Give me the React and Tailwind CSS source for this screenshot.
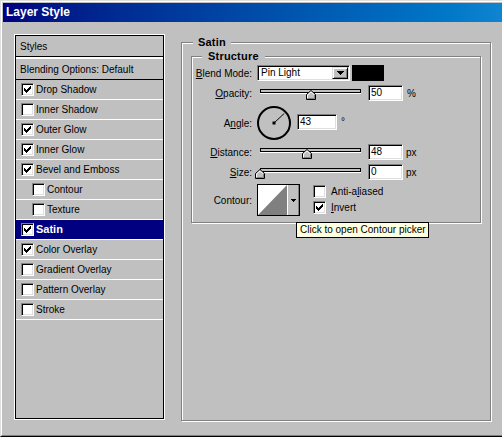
import React from 'react'

const font = "font-['Liberation_Sans',Arial,sans-serif]"

const styleRows = [
  { label: 'Drop Shadow', checked: true },
  { label: 'Inner Shadow', checked: false },
  { label: 'Outer Glow', checked: true },
  { label: 'Inner Glow', checked: true },
  { label: 'Bevel and Emboss', checked: true },
  { label: 'Contour', checked: false, sub: true },
  { label: 'Texture', checked: false, sub: true },
  { label: 'Satin', checked: true, selected: true },
  { label: 'Color Overlay', checked: true },
  { label: 'Gradient Overlay', checked: false },
  { label: 'Pattern Overlay', checked: false },
  { label: 'Stroke', checked: false },
]

// classic windows check mark, drawn pixel by pixel
const checkPixels = [
  [6, 0, 1], [5, 1, 2], [0, 2, 1], [4, 2, 3], [0, 3, 2], [3, 3, 3], [0, 4, 5], [1, 5, 3], [2, 6, 1],
]

const Checkbox = ({ checked }) => (
  <span className="w-[13px] h-[13px] shrink-0 flex items-center justify-center bg-white border border-t-[#808080] border-l-[#808080] border-r-white border-b-white shadow-[inset_1px_1px_0_#000,inset_-1px_-1px_0_#dfdfdf]">
    {checked && (
      <svg width="7" height="7" viewBox="0 0 7 7" shapeRendering="crispEdges">
        {checkPixels.map(([x, y, w], i) => (
          <rect key={i} x={x} y={y} width={w} height="1" fill="#000" />
        ))}
      </svg>
    )}
  </span>
)

const Sunken = ({ className, children }) => (
  <div className={`bg-white border border-t-[#808080] border-l-[#808080] border-r-white border-b-white shadow-[inset_1px_1px_0_#000,inset_-1px_-1px_0_#dfdfdf] p-[1px] ${className}`}>
    {children}
  </div>
)

const Thumb = () => (
  <svg width="10" height="10" viewBox="0 0 10 10">
    <polygon points="0.5,9.5 0.5,4.5 5,0.5 9.5,4.5 9.5,9.5" fill="#c0c0c0" stroke="#000" />
    <polyline points="1.5,8.5 1.5,5 5,1.9 8,4.6" fill="none" stroke="#fff" />
    <polyline points="8.5,5 8.5,8.5 1.5,8.5" fill="none" stroke="#808080" />
  </svg>
)

const Slider = ({ pct }) => (
  <div className="relative ml-[4px] w-[109px] h-[16px] shrink-0">
    <div className="absolute left-[4px] top-[4px] w-[101px] h-[4px] border border-black bg-[#c0c0c0] shadow-[0_1px_0_#fff]" />
    <div className="absolute top-[5px]" style={{ left: `${4 + pct * 101 - 5}px` }}>
      <Thumb />
    </div>
  </div>
)

const Field = ({ value, w = 'w-[35px]' }) => (
  <Sunken className={`${w} h-[16px] flex items-center text-[10px] leading-none pl-[2px] shrink-0`}>
    {value}
  </Sunken>
)

const Label = ({ children }) => (
  <span className="w-[60px] text-right text-[10px] shrink-0">{children}</span>
)

const u = (c) => <span className="underline underline-offset-[1px]">{c}</span>

const App = () => {
  return (
    <div className={`relative w-[502px] h-[437px] overflow-hidden bg-[#c0c0c0] text-black ${font} border-t border-l border-b border-t-[#dfdfdf] border-l-[#dfdfdf] border-b-black`}>
      <div className="h-full border-t border-l border-b border-t-white border-l-white border-b-[#808080] pt-[1px] pl-[1px]">
        {/* Title bar */}
        <div className="h-[19px] bg-gradient-to-r from-[#000080] to-[#1084d0] pl-[3px] text-white font-bold text-[12px] leading-[19px]">
          Layer Style
        </div>

        <div className="flex items-start pt-[12px] pl-[11px]">
          {/* Styles list */}
          <div className="w-[151px] h-[386px] shrink-0 border border-white">
            <div className="h-full border border-black text-[10px]">
              <div className="h-[21px] border-b border-black flex items-center pl-[4px]">Styles</div>
              <div className="h-[2px] border-t border-white border-b border-black" />
              <div className="h-[21px] border-b border-black flex items-center pl-[4px]">Blending Options: Default</div>
              {styleRows.map((r) => (
                <div
                  key={r.label}
                  className={`h-[20px] border-b border-white flex items-center ${r.sub ? 'pl-[16px]' : 'pl-[5px]'} ${r.selected ? 'bg-[#000080] text-white font-bold text-[11px]' : ''}`}
                >
                  <Checkbox checked={r.checked} />
                  <span className="ml-[2px]">{r.label}</span>
                </div>
              ))}
            </div>
          </div>

          {/* Satin group */}
          <div className="relative ml-[16px] mt-[8px] w-[310px] h-[379px] shrink-0 border border-[#808080] shadow-[1px_1px_0_#fff,inset_1px_1px_0_#fff] pt-[13px] pl-[9px]">
            <span className="absolute left-[11px] top-[-7px] px-[5px] bg-[#c0c0c0] font-bold text-[11px] leading-[13px] tracking-[0.2px]">Satin</span>

            {/* Structure group */}
            <div className="relative w-[290px] h-[167px] border border-[#808080] shadow-[1px_1px_0_#fff,inset_1px_1px_0_#fff] text-[10px]">
              <span className="absolute left-[10px] top-[-7px] px-[6px] bg-[#c0c0c0] font-bold text-[11px] leading-[13px] tracking-[0.2px]">Structure</span>

              <div className="mt-[8px] h-[16px] flex items-center">
                <Label>{u('B')}lend Mode:</Label>
                <Sunken className="ml-[5px] w-[93px] h-[16px] flex shrink-0">
                  <span className="flex-1 pl-[2px] flex items-center leading-none">Pin Light</span>
                  <span className="w-[16px] h-full flex items-center justify-center bg-[#c0c0c0] border border-t-[#dfdfdf] border-l-[#dfdfdf] border-r-black border-b-black shadow-[inset_1px_1px_0_#fff,inset_-1px_-1px_0_#808080]">
                    <svg width="7" height="4" viewBox="0 0 7 4" shapeRendering="crispEdges">
                      <path d="M0 0h7v1H6v1H5v1H4v1H3V3H2V2H1V1H0z" fill="#000" />
                    </svg>
                  </span>
                </Sunken>
                <div className="ml-[2px] w-[32px] h-[16px] bg-black shrink-0" />
              </div>

              <div className="mt-[4px] h-[16px] flex items-center">
                <Label>{u('O')}pacity:</Label>
                <Slider pct={0.5} />
                <div className="ml-[3px]"><Field value="50" /></div>
                <span className="ml-[4px]">%</span>
              </div>

              <div className="mt-[5px] h-[34px] flex items-center">
                <Label>A{u('n')}gle:</Label>
                <svg className="ml-[5px] shrink-0" width="34" height="34" viewBox="0 0 34 34">
                  <circle cx="17" cy="17" r="16" fill="none" stroke="#000" strokeWidth="2" />
                  <line x1="17" y1="17" x2="27.2" y2="7.5" stroke="#000" strokeWidth="1" />
                  <rect x="15.5" y="15.5" width="3" height="3" fill="#000" />
                </svg>
                <div className="ml-[6px] self-start mt-[8px]"><Field value="43" w="w-[40px]" /></div>
                <span className="ml-[4px] self-start mt-[11px] leading-[10px]">°</span>
              </div>

              <div className="mt-[4px] h-[16px] flex items-center">
                <Label>{u('D')}istance:</Label>
                <Slider pct={0.47} />
                <div className="ml-[3px]"><Field value="48" /></div>
                <span className="ml-[3px]">px</span>
              </div>

              <div className="mt-[4px] h-[16px] flex items-center">
                <Label>{u('S')}ize:</Label>
                <Slider pct={0} />
                <div className="ml-[3px]"><Field value="0" /></div>
                <span className="ml-[3px]">px</span>
              </div>

              <div className="mt-[4px] h-[32px] flex items-center">
                <Label>Contour:</Label>
                <div className="ml-[5px] w-[43px] h-[32px] flex shrink-0 border border-black">
                  <svg width="29" height="30" viewBox="0 0 29 30" className="bg-white shrink-0">
                    <polygon points="0,30 29,0 29,30" fill="#808080" />
                  </svg>
                  <span className="flex-1 flex items-center justify-center bg-[#c0c0c0] border-l border-white border-r border-r-[#808080]">
                    <svg width="5" height="3" viewBox="0 0 5 3" shapeRendering="crispEdges">
                      <path d="M0 0h5v1H4v1H3v1H2V2H1V1H0z" fill="#000" />
                    </svg>
                  </span>
                </div>
                <div className="ml-[13px] self-start pt-[1px] flex flex-col gap-[3px]">
                  <div className="h-[13px] flex items-center">
                    <Checkbox checked={false} />
                    <span className="ml-[5px]">Anti-a{u('l')}iased</span>
                  </div>
                  <div className="h-[13px] flex items-center">
                    <Checkbox checked={true} />
                    <span className="ml-[5px]">{u('I')}nvert</span>
                  </div>
                </div>
              </div>
            </div>
          </div>
        </div>
      </div>

      {/* Tooltip */}
      <div className="absolute left-[295px] top-[221px] w-[133px] h-[16px] bg-[#ffffe1] border border-black text-[10px] leading-[14px] pl-[3px] whitespace-nowrap">
        Click to open Contour picker
      </div>
    </div>
  )
}

export default App
